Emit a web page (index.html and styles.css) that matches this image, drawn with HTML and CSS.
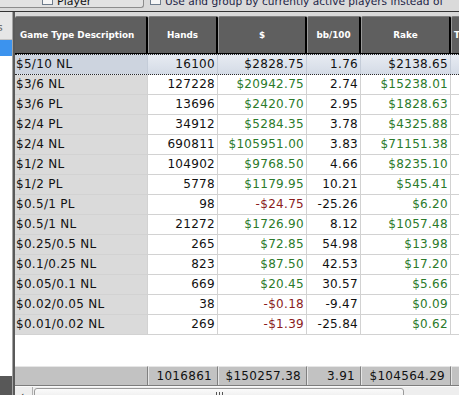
FILE: index.html
```html
<!DOCTYPE html>
<html>
<head>
<meta charset="utf-8">
<link rel="stylesheet" href="styles.css">
</head>
<body>
<div class="toolbar">
  <div class="group"><span class="chk"></span><span class="lbl">Player</span></div>
  <span class="chk chk2"></span><span class="lbl lbl2">Use and group by currently active players instead of</span>
</div>
<div class="main">
  <div class="side">
    <div class="side-head"><span class="cut">s</span></div>
    <div class="side-sel"></div>
    <div class="side-fill"></div>
    <div class="side-dark"></div>
  </div>
  <div class="grid">
    <div class="row head">
      <div class="hc first">Game Type Description</div>
      <div class="hc">Hands</div>
      <div class="hc">$</div>
      <div class="hc">bb/100</div>
      <div class="hc">Rake</div>
      <div class="hc extra">T</div>
    </div>
    <div class="row sel"><div class="c name">$5/10 NL</div><div class="c">16100</div><div class="c">$2828.75</div><div class="c">1.76</div><div class="c">$2138.65</div><div class="c"></div></div>
    <div class="row"><div class="c name">$3/6 NL</div><div class="c">127228</div><div class="c pos">$20942.75</div><div class="c">2.74</div><div class="c pos">$15238.01</div><div class="c"></div></div>
    <div class="row"><div class="c name">$3/6 PL</div><div class="c">13696</div><div class="c pos">$2420.70</div><div class="c">2.95</div><div class="c pos">$1828.63</div><div class="c"></div></div>
    <div class="row"><div class="c name">$2/4 PL</div><div class="c">34912</div><div class="c pos">$5284.35</div><div class="c">3.78</div><div class="c pos">$4325.88</div><div class="c"></div></div>
    <div class="row"><div class="c name">$2/4 NL</div><div class="c">690811</div><div class="c pos">$105951.00</div><div class="c">3.83</div><div class="c pos">$71151.38</div><div class="c"></div></div>
    <div class="row"><div class="c name">$1/2 NL</div><div class="c">104902</div><div class="c pos">$9768.50</div><div class="c">4.66</div><div class="c pos">$8235.10</div><div class="c"></div></div>
    <div class="row"><div class="c name">$1/2 PL</div><div class="c">5778</div><div class="c pos">$1179.95</div><div class="c">10.21</div><div class="c pos">$545.41</div><div class="c"></div></div>
    <div class="row"><div class="c name">$0.5/1 PL</div><div class="c">98</div><div class="c neg">-$24.75</div><div class="c">-25.26</div><div class="c pos">$6.20</div><div class="c"></div></div>
    <div class="row"><div class="c name">$0.5/1 NL</div><div class="c">21272</div><div class="c pos">$1726.90</div><div class="c">8.12</div><div class="c pos">$1057.48</div><div class="c"></div></div>
    <div class="row"><div class="c name">$0.25/0.5 NL</div><div class="c">265</div><div class="c pos">$72.85</div><div class="c">54.98</div><div class="c pos">$13.98</div><div class="c"></div></div>
    <div class="row"><div class="c name">$0.1/0.25 NL</div><div class="c">823</div><div class="c pos">$87.50</div><div class="c">42.53</div><div class="c pos">$17.20</div><div class="c"></div></div>
    <div class="row"><div class="c name">$0.05/0.1 NL</div><div class="c">669</div><div class="c pos">$20.45</div><div class="c">30.57</div><div class="c pos">$5.66</div><div class="c"></div></div>
    <div class="row"><div class="c name">$0.02/0.05 NL</div><div class="c">38</div><div class="c neg">-$0.18</div><div class="c">-9.47</div><div class="c pos">$0.09</div><div class="c"></div></div>
    <div class="row"><div class="c name">$0.01/0.02 NL</div><div class="c">269</div><div class="c neg">-$1.39</div><div class="c">-25.84</div><div class="c pos">$0.62</div><div class="c"></div></div>
    <div class="blank"></div>
    <div class="row foot">
      <div class="f first"></div>
      <div class="f">1016861</div>
      <div class="f">$150257.38</div>
      <div class="f">3.91</div>
      <div class="f">$104564.29</div>
      <div class="f"></div>
    </div>
    <div class="hscroll">
      <div class="sbtn"><span class="arrow">&#8249;</span></div>
      <div class="thumb"><span class="grip"></span></div>
    </div>
  </div>
</div>
</body>
</html>
```
FILE: styles.css
```css
* { box-sizing: border-box; }
html, body { margin: 0; padding: 0; }
body {
  width: 459px;
  height: 395px;
  overflow: hidden;
  background: #dcdcdc;
  font-family: "DejaVu Sans", sans-serif;
}

/* top toolbar */
.toolbar {
  height: 12px;
  display: flex;
  align-items: flex-start;
  overflow: hidden;
  white-space: nowrap;
  background: #dadada;
  border-bottom: 1px solid #333;
}
.group {
  width: 144px;
  height: 8px;
  flex: none;
  display: flex;
  align-items: flex-start;
  border-right: 1px solid #8c8c8c;
  border-bottom: 1px solid #8c8c8c;
  border-bottom-right-radius: 3px;
  background: #e2e2e2;
}
.chk {
  flex: none;
  width: 11px;
  height: 11px;
  margin-top: -6px;
  margin-left: 42px;
  border: 1px solid #6e7c8c;
  background: #f6f6f6;
}
.chk2 { margin-left: 6px; }
.lbl {
  font-size: 11px;
  line-height: 13px;
  margin-top: -5px;
  margin-left: 4px;
  color: #111;
}
.lbl2 { color: #1c2446; font-size: 10.6px; }

/* main area */
.main {
  display: flex;
  height: 383px;
}
.side {
  width: 13px;
  flex: none;
  display: flex;
  flex-direction: column;
  border-right: 1px solid #a4a4a4;
  background: #fff;
}
.side-head {
  height: 28px;
  flex: none;
  background: #e6e6e6;
  border-bottom: 1px solid #c4c4c4;
  font-size: 11px;
  line-height: 28px;
  padding-top: 2px;
  color: #666;
  overflow: hidden;
}
.cut { margin-left: -3px; }
.side-sel { height: 16px; flex: none; background: #3c93ee; }
.side-fill { flex: 1; background: #fff; }
.side-dark { height: 19px; flex: none; background: #585858; }

.grid {
  flex: 1;
  min-width: 0;
  display: flex;
  flex-direction: column;
  border-left: 2px solid #5a5a5a;
  background: #d8d8d8;
  padding-top: 4px;
  overflow: hidden;
}
.row {
  flex: none;
  display: grid;
  grid-template-columns: 133px 70px 89px 54px 90px 40px;
  width: 476px;
  height: 20px;
  background: #fff;
  border-bottom: 1px solid #d2d2d2;
  font-size: 12px;
  letter-spacing: 0.3px;
  color: #111;
}
.c {
  border-right: 1px solid #d2d2d2;
  text-align: right;
  padding-right: 2px;
  line-height: 19px;
  white-space: nowrap;
  overflow: hidden;
}
.c.name {
  text-align: left;
  padding-left: 1px;
  background: #dadada;
}
.pos { color: #2b7a2b; }
.neg { color: #8a1c1c; }

/* header */
.row.head {
  height: 39px;
  background: #d8d8d8;
  border-bottom: 2px solid #000;
}
.hc {
  background: #5f5f5f;
  color: #fff;
  font-weight: bold;
  font-size: 8.8px;
  letter-spacing: 0;
  display: flex;
  align-items: center;
  justify-content: center;
  border-top: 1px solid #808080;
  border-left: 1px solid #9a9a9a;
  border-right: 2px solid #000;
  border-top-left-radius: 2px;
  border-top-right-radius: 2px;
}
.hc.first {
  justify-content: flex-start;
  padding-left: 5px;
  border-left: none;
}
.hc.extra { justify-content: flex-start; padding-left: 2px; }

/* selected row */
.row.sel {
  background: linear-gradient(#e7ebf2, #d4dbe6);
  border-top: 1px dotted #2a2a2a;
  border-bottom: 1px dotted #2a2a2a;
  margin-top: -1px;
  height: 21px;
}
.row.sel .c { border-right-color: #c4ccd8; line-height: 18px; }
.row.sel .c.name { background: #cdd4df; }

.blank { height: 31px; background: #fff; flex: none; }

/* footer */
.row.foot {
  height: 20px;
  background: #c2c2c2;
  border-bottom: 1px solid #7c7c7c;
}
.f {
  border-top: 1px solid #e6e6e6;
  border-left: 1px solid #e6e6e6;
  border-right: 1px solid #808080;
  text-align: right;
  padding-right: 5px;
  line-height: 18px;
  white-space: nowrap;
  overflow: hidden;
}
.f.first { border-left: none; }

/* horizontal scrollbar */
.hscroll {
  flex: 1;
  min-height: 0;
  overflow: hidden;
  display: flex;
  align-items: flex-start;
  background: #eeeeee;
  border-top: 1px solid #fafafa;
}
.sbtn {
  width: 18px;
  height: 17px;
  flex: none;
  border-right: 1px solid #b0b0b0;
  font-size: 14px;
  line-height: 12px;
  padding-left: 4px;
  color: #333;
  padding-top: 3px;
}
.thumb {
  width: 370px;
  height: 16px;
  flex: none;
  margin-left: 1px;
  margin-top: 1px;
  border: 1px solid #9a9a9a;
  border-radius: 3px;
  background: linear-gradient(#fbfbfb, #e4e4e4);
  display: flex;
  justify-content: center;
}
.grip {
  width: 7px;
  height: 6px;
  margin-top: 3px;
  margin-left: 1px;
  background: repeating-linear-gradient(90deg, #555 0 1px, transparent 1px 3px);
}
```
